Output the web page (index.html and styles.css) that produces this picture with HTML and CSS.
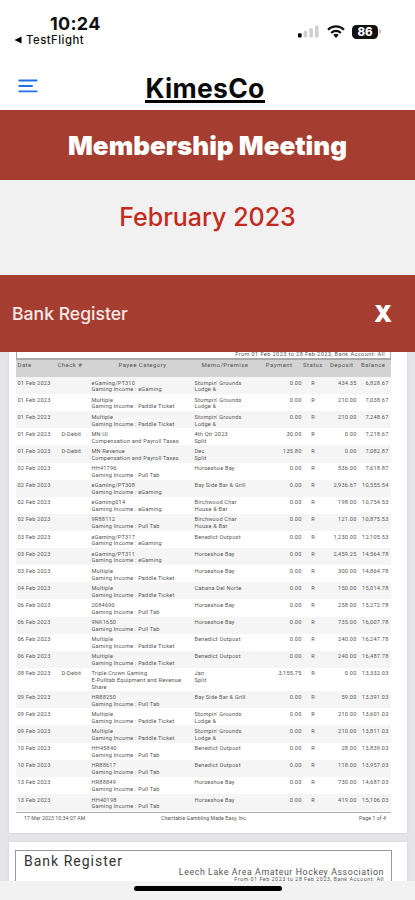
FILE: index.html
```html
<!DOCTYPE html>
<html lang="en">
<head>
    <meta charset="UTF-8">
    <meta name="viewport" content="width=device-width, initial-scale=1.0">
    <title>KimesCo - Membership Meeting</title>
    <link rel="stylesheet" href="styles.css">
</head>
<body>

<div class="screen">
    <div class="status-bar">
        <div class="status-left">
            <div class="time">10:24</div>
            <div class="back-app">
                <svg width="8" height="8" viewBox="0 0 8 8"><path d="M7.5 .5v7L.5 4z"/></svg>
                <span>TestFlight</span>
            </div>
        </div>
        <div class="status-right">
            <svg width="21" height="13" viewBox="0 0 21 13">
                <rect x="0" y="8.3" width="3.6" height="4.2" rx="1"/>
                <g fill="#cfcfcf">
                    <rect x="5.6" y="6" width="3.6" height="6.5" rx="1"/>
                    <rect x="11.3" y="3.3" width="3.6" height="9.2" rx="1"/>
                    <rect x="17" y=".5" width="3.6" height="12" rx="1"/>
                </g>
            </svg>
            <svg class="wifi" width="18" height="13" viewBox="0 0 18 13">
                <g fill="none" stroke="#111" stroke-width="2.1">
                    <path d="M1 4.7a11.4 11.4 0 0 1 16 0"/>
                    <path d="M4.1 7.9a7 7 0 0 1 9.8 0"/>
                </g>
                <path d="M6.3 10.1a3.8 3.8 0 0 1 5.4 0L9 12.9z" fill="#111"/>
            </svg>
            <div class="battery">86</div>
            <div class="battery-cap"></div>
        </div>
    </div>

    <div class="nav">
        <svg class="menu-icon" width="20" height="14" viewBox="0 0 20 14">
            <path d="M1.2 1.5h17.4M1.2 7h12.9M1.2 12.3h17.4" fill="none" stroke="#1f6fe5" stroke-width="1.8" stroke-linecap="round"/>
        </svg>
        <div class="brand">KimesCo</div>
    </div>

    <div class="title">Membership Meeting</div>
    <div class="month">February 2023</div>
    <div class="doc-bar">
        <span>Bank Register</span>
        <span class="close">X</span>
    </div>

    <div class="viewer">
        <div class="sheet first">
            <div class="range">From 01 Feb 2023 to 28 Feb 2023, Bank Account: All</div>
            <div class="row head"><span>Date</span><span>Check #</span><span>Payee Category</span><span>Memo/Premise</span><span>Payment</span><span>Status</span><span>Deposit</span><span>Balance</span></div>
            <div class="rows">
                <div class="row"><span>01 Feb 2023</span><span></span><span>eGaming/PT310<br>Gaming Income : eGaming</span><span>Stompin' Grounds<br>Lodge &amp;</span><span>0.00</span><span>R</span><span>434.35</span><span>6,828.67</span></div>
                <div class="row"><span>01 Feb 2023</span><span></span><span>Multiple<br>Gaming Income : Paddle Ticket</span><span>Stompin' Grounds<br>Lodge &amp;</span><span>0.00</span><span>R</span><span>210.00</span><span>7,038.67</span></div>
                <div class="row"><span>01 Feb 2023</span><span></span><span>Multiple<br>Gaming Income : Paddle Ticket</span><span>Stompin' Grounds<br>Lodge &amp;</span><span>0.00</span><span>R</span><span>210.00</span><span>7,248.67</span></div>
                <div class="row"><span>01 Feb 2023</span><span>D-Debit</span><span>MN UI<br>Compensation and Payroll Taxes</span><span>4th Qtr 2023<br>Split</span><span>30.00</span><span>R</span><span>0.00</span><span>7,218.67</span></div>
                <div class="row"><span>01 Feb 2023</span><span>D-Debit</span><span>MN Revenue<br>Compensation and Payroll Taxes</span><span>Dec<br>Split</span><span>135.80</span><span>R</span><span>0.00</span><span>7,082.87</span></div>
                <div class="row"><span>02 Feb 2023</span><span></span><span>HH41796<br>Gaming Income : Pull Tab</span><span>Horseshoe Bay</span><span>0.00</span><span>R</span><span>536.00</span><span>7,618.87</span></div>
                <div class="row"><span>02 Feb 2023</span><span></span><span>eGaming/PT308<br>Gaming Income : eGaming</span><span>Bay Side Bar &amp; Grill</span><span>0.00</span><span>R</span><span>2,936.67</span><span>10,555.54</span></div>
                <div class="row"><span>02 Feb 2023</span><span></span><span>eGaming014<br>Gaming Income : eGaming</span><span>Birchwood Char<br>House &amp; Bar</span><span>0.00</span><span>R</span><span>198.00</span><span>10,754.53</span></div>
                <div class="row"><span>02 Feb 2023</span><span></span><span>9R88112<br>Gaming Income : Pull Tab</span><span>Birchwood Char<br>House &amp; Bar</span><span>0.00</span><span>R</span><span>121.00</span><span>10,875.53</span></div>
                <div class="row"><span>03 Feb 2023</span><span></span><span>eGaming/PT317<br>Gaming Income : eGaming</span><span>Benedict Outpost</span><span>0.00</span><span>R</span><span>1,230.00</span><span>12,105.53</span></div>
                <div class="row"><span>03 Feb 2023</span><span></span><span>eGaming/PT311<br>Gaming Income : eGaming</span><span>Horseshoe Bay</span><span>0.00</span><span>R</span><span>2,459.25</span><span>14,564.78</span></div>
                <div class="row"><span>03 Feb 2023</span><span></span><span>Multiple<br>Gaming Income : Paddle Ticket</span><span>Horseshoe Bay</span><span>0.00</span><span>R</span><span>300.00</span><span>14,864.78</span></div>
                <div class="row"><span>04 Feb 2023</span><span></span><span>Multiple<br>Gaming Income : Paddle Ticket</span><span>Cabana Del Norte</span><span>0.00</span><span>R</span><span>150.00</span><span>15,014.78</span></div>
                <div class="row"><span>06 Feb 2023</span><span></span><span>2084690<br>Gaming Income : Pull Tab</span><span>Horseshoe Bay</span><span>0.00</span><span>R</span><span>258.00</span><span>15,272.78</span></div>
                <div class="row"><span>06 Feb 2023</span><span></span><span>9NK1650<br>Gaming Income : Pull Tab</span><span>Horseshoe Bay</span><span>0.00</span><span>R</span><span>735.00</span><span>16,007.78</span></div>
                <div class="row"><span>06 Feb 2023</span><span></span><span>Multiple<br>Gaming Income : Paddle Ticket</span><span>Benedict Outpost</span><span>0.00</span><span>R</span><span>240.00</span><span>16,247.78</span></div>
                <div class="row"><span>06 Feb 2023</span><span></span><span>Multiple<br>Gaming Income : Paddle Ticket</span><span>Benedict Outpost</span><span>0.00</span><span>R</span><span>240.00</span><span>16,487.78</span></div>
                <div class="row tall"><span>08 Feb 2023</span><span>D-Debit</span><span>Triple Crown Gaming<br>E-Pulltab Equipment and Revenue<br>Share</span><span>Jan<br>Split</span><span>3,155.75</span><span>R</span><span>0.00</span><span>13,332.03</span></div>
                <div class="row"><span>09 Feb 2023</span><span></span><span>HR88250<br>Gaming Income : Pull Tab</span><span>Bay Side Bar &amp; Grill</span><span>0.00</span><span>R</span><span>59.00</span><span>13,391.03</span></div>
                <div class="row"><span>09 Feb 2023</span><span></span><span>Multiple<br>Gaming Income : Paddle Ticket</span><span>Stompin' Grounds<br>Lodge &amp;</span><span>0.00</span><span>R</span><span>210.00</span><span>13,601.03</span></div>
                <div class="row"><span>09 Feb 2023</span><span></span><span>Multiple<br>Gaming Income : Paddle Ticket</span><span>Stompin' Grounds<br>Lodge &amp;</span><span>0.00</span><span>R</span><span>210.00</span><span>13,811.03</span></div>
                <div class="row"><span>10 Feb 2023</span><span></span><span>HH45840<br>Gaming Income : Pull Tab</span><span>Benedict Outpost</span><span>0.00</span><span>R</span><span>28.00</span><span>13,839.03</span></div>
                <div class="row"><span>10 Feb 2023</span><span></span><span>HR88617<br>Gaming Income : Pull Tab</span><span>Benedict Outpost</span><span>0.00</span><span>R</span><span>118.00</span><span>13,957.03</span></div>
                <div class="row"><span>13 Feb 2023</span><span></span><span>HR88849<br>Gaming Income : Pull Tab</span><span>Horseshoe Bay</span><span>0.00</span><span>R</span><span>730.00</span><span>14,687.03</span></div>
                <div class="row"><span>13 Feb 2023</span><span></span><span>HH40198<br>Gaming Income : Pull Tab</span><span>Horseshoe Bay</span><span>0.00</span><span>R</span><span>419.00</span><span>15,106.03</span></div>
            </div>
            <div class="sheet-footer"><span>17 Mar 2023 10:34:07 AM</span><span>Charitable Gambling Made Easy, Inc.</span><span>Page 1 of 4</span></div>
        </div>

        <div class="sheet second">
            <div class="sheet-header">
                <div class="sheet-title">Bank Register</div>
                <div class="org">Leech Lake Area Amateur Hockey Association</div>
                <div class="range-next">From 01 Feb 2023 to 28 Feb 2023, Bank Account: All</div>
            </div>
        </div>
    </div>

    <div class="home-bar"><div class="home-indicator"></div></div>
</div>

</body>
</html>
```
FILE: styles.css
```css
body {
    margin: 0;
    font-family: Inter, "Liberation Sans", sans-serif;
    background: #fff;
}
.screen {
    display: flex;
    flex-direction: column;
    width: 415px;
    height: 900px;
    overflow: hidden;
}

/* status bar */
.status-bar {
    display: flex;
    justify-content: space-between;
    height: 62px;
    box-sizing: border-box;
    padding: 14px 34px 0 14px;
}
.time {
    margin-left: 36px;
    font-size: 18px;
    line-height: 20px;
    font-weight: 700;
    letter-spacing: 0.3px;
    color: #111;
}
.back-app {
    display: flex;
    align-items: center;
    gap: 4px;
    height: 12px;
    font-size: 11.3px;
    font-weight: 500;
    letter-spacing: 0.5px;
    color: #111;
}
.status-right {
    display: flex;
    align-items: center;
    height: 35px;
}
.wifi {
    margin: 0 7px 0 8px;
}
.battery {
    width: 26px;
    height: 14px;
    border-radius: 4.5px;
    background: #111;
    color: #fff;
    font-size: 11.5px;
    line-height: 14px;
    font-weight: 800;
    text-align: center;
}
.battery-cap {
    width: 2px;
    height: 5px;
    margin-left: 1px;
    border-radius: 0 2px 2px 0;
    background: #c4c4c4;
}

/* nav */
.nav {
    display: grid;
    grid-template-columns: 130px 1fr 130px;
    height: 48px;
}
.menu-icon {
    margin: 17px 0 0 18px;
}
.brand {
    justify-self: center;
    height: 31px;
    margin: 10px 5px 0 0;
    border-bottom: 3px solid #000;
    box-sizing: border-box;
    font-size: 26.5px;
    line-height: 32px;
    font-weight: 700;
    letter-spacing: 0.3px;
    white-space: nowrap;
    color: #0b0b0b;
}

/* headings */
.title {
    height: 70px;
    background: #a53d31;
    color: #fff;
    font-size: 26px;
    line-height: 71px;
    font-weight: 900;
    text-align: center;
}
.month {
    height: 95px;
    background: #f1f1f1;
    color: #c42a1e;
    font-size: 25px;
    line-height: 74px;
    font-weight: 500;
    text-align: center;
}
.doc-bar {
    display: flex;
    justify-content: space-between;
    align-items: center;
    height: 77px;
    padding: 0 23px 0 12px;
    box-sizing: border-box;
    background: #a53d31;
    color: #f8e9e7;
    font-size: 17.6px;
    font-weight: 500;
}
.close {
    color: #fff;
    font-size: 23px;
    font-weight: 900;
}

/* document viewer */
.viewer {
    height: 529px;
    overflow: hidden;
    background: #e5e5e9;
    font-family: Roboto, "Liberation Sans", Arial, sans-serif;
    font-size: 5.6px;
    line-height: 6.7px;
    letter-spacing: 0.2px;
    color: #555;
}
.sheet {
    width: 398px;
    margin-left: 9px;
    padding: 0 16px 0 7px;
    box-sizing: border-box;
    background: #fff;
    box-shadow: 0 0 2px #c8c8cc;
}
.sheet.first {
    height: 481px;
}
.range {
    height: 7px;
    padding-right: 5px;
    border: 1px solid #aaa;
    border-top: 0;
    box-sizing: border-box;
    text-align: right;
    line-height: 5px;
    letter-spacing: 0.4px;
    overflow: hidden;
}
.row {
    display: grid;
    grid-template-columns: 44px 30px 103px 57px 50px 23px 32px 32px;
    width: 375px;
    height: 17.12px;
    padding: 2.6px 2px 0 1.5px;
    box-sizing: border-box;
    white-space: nowrap;
}
.row span:nth-child(5),
.row span:nth-child(7),
.row span:nth-child(8) {
    text-align: right;
}
.row span:nth-child(6) {
    text-align: center;
}
.rows .row:nth-child(odd) {
    background: #f5f5f5;
}
.row.tall {
    height: 23.4px;
}
.row.head {
    height: 18px;
    padding-top: 2px;
    border-top: 1px solid #aaa;
    background: #d3d3d3;
    font-size: 6px;
    letter-spacing: 0.45px;
}
.row.head span:nth-child(2) {
    margin-left: -4px;
}
.row.head span:nth-child(3) {
    padding-left: 27px;
}
.row.head span:nth-child(4) {
    padding-left: 7px;
}
.row.head span:nth-child(5) {
    padding-right: 9px;
}
.row.head span:nth-child(7),
.row.head span:nth-child(8) {
    padding-right: 3px;
}
.sheet-footer {
    display: grid;
    grid-template-columns: 137px 1fr auto;
    margin-top: 1px;
    padding: 2px 5px 0 8px;
    border-top: 1px solid #aaa;
    font-size: 5.2px;
    letter-spacing: 0.07px;
}
.sheet.second {
    height: 60px;
    margin-top: 9px;
    padding-top: 8px;
}
.sheet-header {
    width: 377px;
    height: 60px;
    padding: 1px 7px 0 8px;
    box-sizing: border-box;
    border: 1px solid #999;
    margin-left: -1px;
}
.sheet-title {
    font-size: 14px;
    line-height: 19px;
    letter-spacing: 1px;
    color: #333;
}
.org {
    font-size: 8.8px;
    line-height: 9px;
    letter-spacing: 0.6px;
    margin-top: -3px;
    text-align: right;
    white-space: nowrap;
}
.range-next {
    margin-top: -1px;
    line-height: 6px;
    letter-spacing: 0.4px;
    text-align: right;
}

/* home indicator */
.home-bar {
    flex: 1;
    background: #f2f2f2;
}
.home-indicator {
    width: 148px;
    height: 5px;
    margin: 5px auto 0;
    border-radius: 3px;
    background: #000;
}
```
